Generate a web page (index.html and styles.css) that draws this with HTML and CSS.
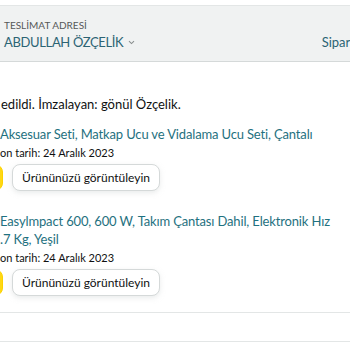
FILE: index.html
```html
<!DOCTYPE html>
<html lang="tr">
  <head>
    <meta charset="UTF-8" />
    <title>Siparişlerim</title>
    <link rel="stylesheet" href="styles.css">
  </head>
  <body>
    <div class="topbar">
      <div class="address">
        <div class="label">TESLİMAT ADRESİ</div>
        <div class="name">
          ABDULLAH ÖZÇELİK
          <svg class="chev" width="7" height="5" viewBox="0 0 7 5">
            <path d="M1 1.2 L3.5 3.6 L6 1.2" fill="none" stroke="#8a9090" stroke-width="1.1" />
          </svg>
        </div>
      </div>
      <div class="orderno">Sipariş</div>
    </div>

    <div class="shipment">
      <p class="status">edildi. İmzalayan: gönül Özçelik.</p>

      <div class="item">
        <a class="title" href="#">Aksesuar Seti, Matkap Ucu ve Vidalama Ucu Seti, Çantalı</a>
        <div class="date">on tarih: 24 Aralık 2023</div>
        <div class="actions">
          <button class="btn-yellow" aria-label="Tekrar satın al"></button>
          <button class="btn">Ürününüzü görüntüleyin</button>
        </div>
      </div>

      <div class="item">
        <a class="title" href="#">Easylmpact 600, 600 W, Takım Çantası Dahil, Elektronik Hız<br>.7 Kg, Yeşil</a>
        <div class="date">on tarih: 24 Aralık 2023</div>
        <div class="actions">
          <button class="btn-yellow" aria-label="Tekrar satın al"></button>
          <button class="btn">Ürününüzü görüntüleyin</button>
        </div>
      </div>
    </div>

    <div class="footer"></div>
  </body>
</html>
```

FILE: styles.css
```css
body {
  margin: 0;
  padding-top: 5px;
  font-family: Lato, "Noto Sans", Arial, sans-serif;
  color: #0f1111;
  background-color: white;
  overflow: hidden;
}
.topbar {
  display: flex;
  justify-content: space-between;
  align-items: flex-start;
  height: 57px;
  box-sizing: border-box;
  padding: 12px 0 0 4px;
  background-color: #f0f2f2;
  border-top: 1px solid #e3e6e6;
  border-bottom: 1px solid #d5d9d9;
  white-space: nowrap;
}
.label {
  font-size: 10px;
  color: #565959;
  line-height: 14px;
}
.name {
  margin-top: 1px;
  font-size: 13px;
  letter-spacing: -0.35px;
  color: #2c6474;
  line-height: 18px;
}
.chev {
  margin-left: 2px;
  vertical-align: 2px;
}
.orderno {
  margin-top: 15px;
  margin-right: -9px;
  font-size: 13px;
  color: #2c6474;
  line-height: 18px;
}
.shipment {
  padding-top: 33px;
  padding-bottom: 16px;
  border-bottom: 1px solid #e3e6e6;
}
.status {
  margin: 0 0 12px 1px;
  font-size: 13px;
  line-height: 18px;
}
.item {
  margin-bottom: 21px;
}
.item:last-child {
  margin-bottom: 0;
}
.title {
  display: block;
  color: #1f7180;
  text-decoration: none;
  font-size: 13px;
  letter-spacing: -0.15px;
  line-height: 18px;
}
.date {
  margin-top: 1px;
  font-size: 11px;
  line-height: 17px;
}
.actions {
  display: flex;
  gap: 9px;
  margin-top: 3px;
}
.actions button {
  height: 27px;
  border-radius: 8px;
  font-family: inherit;
  font-size: 12px;
  padding: 0 9px;
  color: #0f1111;
}
.btn-yellow {
  margin-left: -100px;
  width: 103px;
  background-color: #ffd814;
  border: 1px solid #fcd200;
}
.btn {
  background-color: white;
  border: 1px solid #d5d9d9;
  box-shadow: 0 2px 5px rgba(213, 217, 217, 0.5);
}
.footer {
  height: 28px;
  border-bottom: 1px solid #e3e6e6;
}
```
